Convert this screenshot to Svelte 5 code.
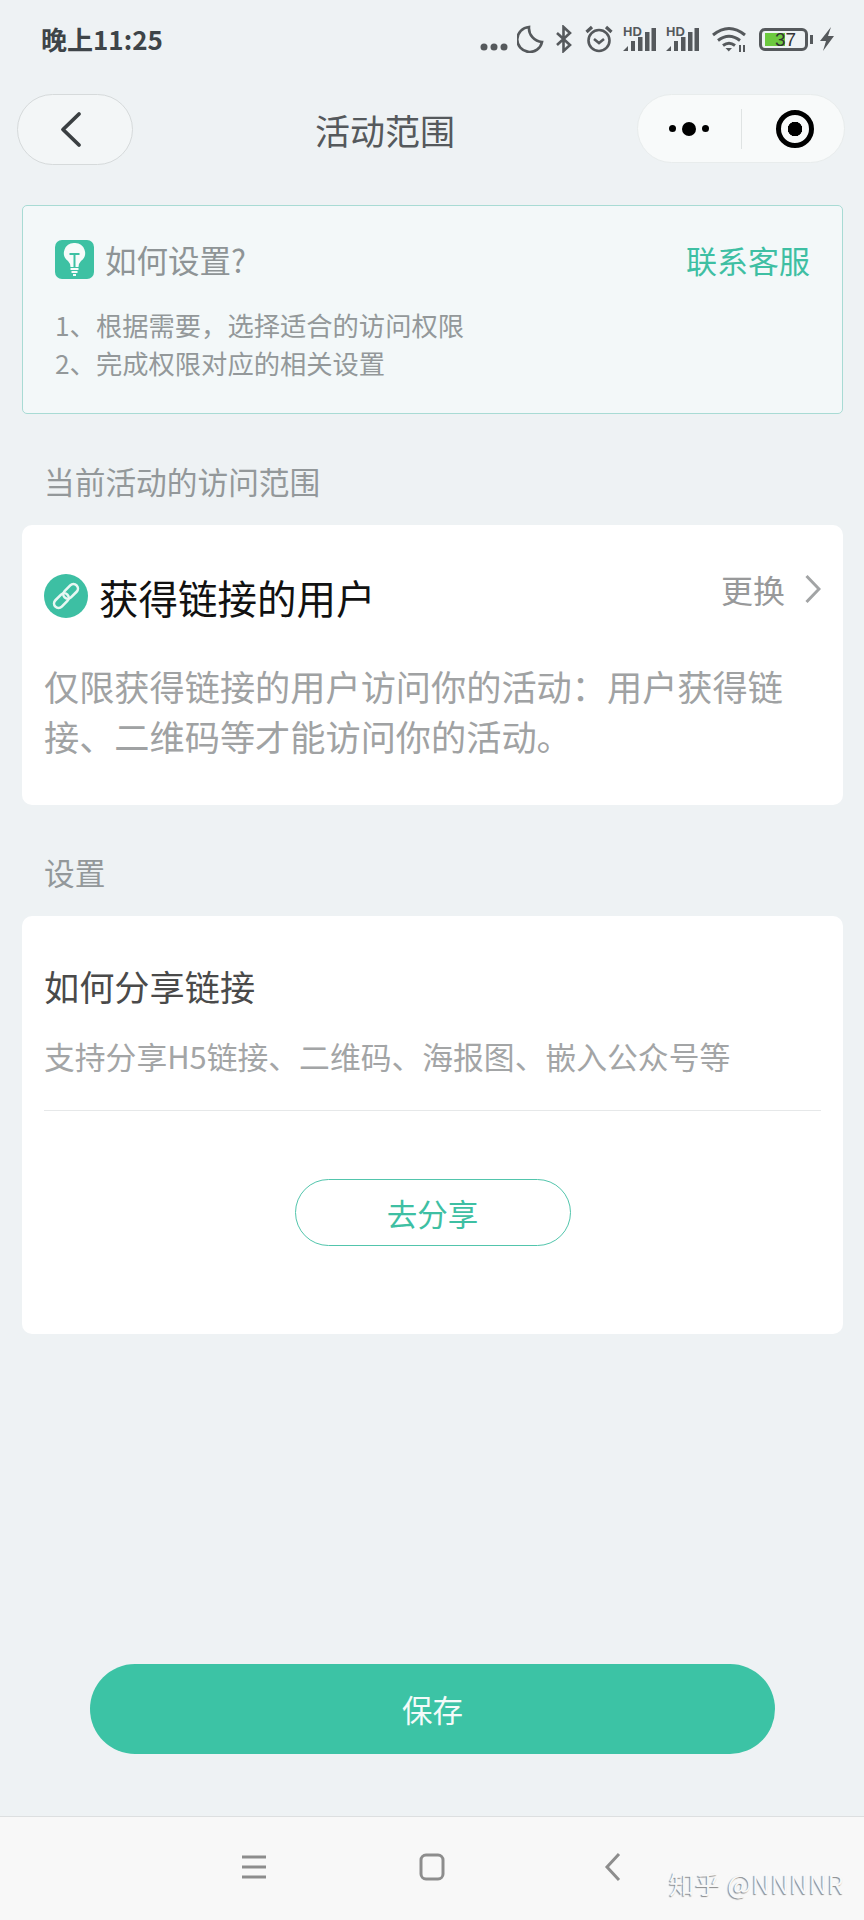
<script>
  const tip = ['1、根据需要，选择适合的访问权限', '2、完成权限对应的相关设置'];
</script>

<div class="page">
  <div class="status">
    <span class="clock">晚上11:25</span>
    <div class="sysicons">
      <svg width="28" height="28" viewBox="0 0 28 28"><circle cx="4" cy="22" r="3.500"/><circle cx="14" cy="22" r="3.500"/><circle cx="24" cy="22" r="3.500"/></svg>
      <svg class="line moon" width="27" height="28" viewBox="0 0 27 28"><path d="M12 2 A12.500 12.500 0 1 0 25 17 A14 14 0 0 1 12 2Z"/></svg>
      <svg class="line bt" width="17" height="28" viewBox="0 0 17 28"><path d="M2 8 L15 20 L8.500 26 V2 L15 8 L2 20"/></svg>
      <svg class="line alarm" width="28" height="28" viewBox="0 0 28 28"><circle cx="14" cy="15.500" r="10.500"/><path d="M9 14 L14 18 L19 14"/><path class="ear" d="M1.500 7 L7 2 M21 2 L26.500 7"/></svg>
      <span class="sig first"><b>HD</b><svg width="33" height="26" viewBox="0 0 33 26"><path d="M0 25 L5 20 V25Z M8 15 h4 v10 h-4z M15 11 h4.500 v14 h-4.500z M22 6 h4.500 v19 h-4.500z M28.500 2 h4.500 v23 h-4.500z"/></svg></span>
      <span class="sig"><b>HD</b><svg width="33" height="26" viewBox="0 0 33 26"><path d="M0 25 L5 20 V25Z M8 15 h4 v10 h-4z M15 11 h4.500 v14 h-4.500z M22 6 h4.500 v19 h-4.500z M28.500 2 h4.500 v23 h-4.500z"/></svg></span>
      <svg class="wifi" width="35" height="26" viewBox="0 0 35 26"><path d="M1 9 Q17 -4 33 9 M6 14.500 Q17 6 28 14.500 M11 19.500 Q17 15 23 19.500"/><path class="fill" d="M13.500 22 H20 L16.750 25.500Z"/><path class="thin" d="M28 19 v7 M32 19 v7"/></svg>
      <div class="battery"><div class="bat-body"><i></i><span>37</span></div><em></em></div>
      <svg class="bolt" width="16" height="24" viewBox="0 0 16 24"><path d="M12 0 L1 14 H7 L4 24 L15 9 H9Z"/></svg>
    </div>
  </div>

  <div class="nav">
    <button class="back" aria-label="返回"><svg width="22" height="37" viewBox="0 0 22 37"><path d="M19 3 L3 18.500 L19 34"/></svg></button>
    <div class="title">活动范围</div>
    <div class="capsule">
      <span class="dots"><i></i><i class="big"></i><i></i></span>
      <span class="sep"></span>
      <span class="target"></span>
    </div>
  </div>

  <section class="tip">
    <div class="tip-head">
      <div class="tip-title">
        <svg class="bulb" width="39" height="39" viewBox="0 0 39 39"><rect width="39" height="39" rx="7" fill="#3dc1a3"/><path d="M19.500 3 A10 10 0 0 1 26 21 Q23.500 23.500 23.500 27 H15.500 Q15.500 23.500 13 21 A10 10 0 0 1 19.500 3Z" fill="#f6fbfa"/><path d="M14.500 14 H24.500 M19.500 14 V27" stroke="#3dc1a3" stroke-width="2" fill="none"/><path d="M15.500 29 H23.500 M16.500 32 H22.500 M18 35 H21" stroke="#f6fbfa" stroke-width="2"/></svg>
        <span>如何设置?</span>
      </div>
      <span class="contact">联系客服</span>
    </div>
    <div class="tip-lines">
      {#each tip as t}<p>{t}</p>{/each}
    </div>
  </section>

  <h2 class="label first">当前活动的访问范围</h2>

  <section class="card scope">
    <div class="scope-head">
      <div class="scope-title">
        <svg width="44" height="44" viewBox="0 0 44 44"><circle cx="22" cy="22" r="22" fill="#3dbfa3"/><g fill="none" stroke="#e8f7f3" stroke-width="2.600" transform="rotate(-45 22 22)"><rect x="7" y="17.500" width="17" height="9" rx="4.500"/><rect x="20" y="17.500" width="17" height="9" rx="4.500"/></g></svg>
        <span>获得链接的用户</span>
      </div>
      <div class="change"><span>更换</span><svg width="16" height="30" viewBox="0 0 16 30"><path d="M1.500 2 L14 15 L1.500 28"/></svg></div>
    </div>
    <p class="scope-desc">仅限获得链接的用户访问你的活动：用户获得链接、二维码等才能访问你的活动。</p>
  </section>

  <h2 class="label second">设置</h2>

  <section class="card share">
    <h3>如何分享链接</h3>
    <p>支持分享H5链接、二维码、海报图、嵌入公众号等</p>
    <div class="rule"></div>
    <button class="go">去分享</button>
  </section>

  <div class="spacer"></div>

  <button class="save">保存</button>

  <div class="sysnav">
    <svg class="menu" width="26" height="24" viewBox="0 0 26 24"><path d="M1 2 H25 M1 12 H25 M1 22 H25"/></svg>
    <svg class="home" width="26" height="28" viewBox="0 0 26 28"><rect x="2" y="2" width="22" height="24" rx="5"/></svg>
    <svg class="tri" width="18" height="30" viewBox="0 0 18 30"><path d="M15 2 L3 15 L15 28"/></svg>
    <span class="mark">知乎 @NNNNR</span>
  </div>
</div>

<style>
  :global(body) { margin: 0; background: #eef2f4; }
  .page {
    width: 864px; height: 1920px; display: flex; flex-direction: column; overflow: hidden;
    background: #eef2f4;
    font-family: "Noto Sans CJK SC", "Noto Sans", sans-serif;
  }
  p, h2, h3 { margin: 0; font-weight: 400; }
  button { font-family: inherit; padding: 0; }

  .status { height: 78px; flex: none; display: flex; justify-content: space-between; align-items: center; padding: 0 29px 0 41px; box-sizing: border-box; }
  .clock { font-size: 26px; font-weight: 700; color: #3e4448; position: relative; top: -1px; }
  .sysicons { display: flex; align-items: center; color: #55595c; }
  .sysicons svg { fill: #55595c; flex: none; }
  .sysicons .line { fill: none; stroke: #55595c; stroke-width: 2.600; }
  .moon { margin-left: 9px; }
  .bt { margin-left: 11px; }
  .alarm { margin-left: 13px; }
  .alarm .ear { stroke-width: 3.200; }
  .sig { position: relative; display: block; width: 33px; height: 26px; margin-left: 10px; }
  .sig b { position: absolute; left: 0; top: -1px; font: 700 13px/13px "Liberation Sans", sans-serif; }
  .sig svg { position: absolute; left: 0; top: 0; }
  .sysicons .wifi { fill: none; stroke: #55595c; stroke-width: 3; margin-left: 13px; }
  .wifi .fill { fill: #55595c; stroke: none; }
  .wifi .thin { stroke-width: 2; }
  .battery { display: flex; align-items: center; gap: 2px; margin-left: 12px; }
  .bat-body { position: relative; width: 43px; height: 17px; border: 3px solid #55595c; border-radius: 6px; box-sizing: content-box; }
  .bat-body i { position: absolute; left: 3px; top: 2px; bottom: 2px; width: 20px; background: #6cc93f; }
  .bat-body span { position: absolute; left: 13px; top: 0; font: 19px/17px "Liberation Sans", sans-serif; color: #333; }
  .battery em { width: 3px; height: 9px; background: #55595c; }
  .bolt { margin-left: 6px; }

  .nav { height: 94px; flex: none; display: flex; align-items: center; padding: 0 19px 0 17px; box-sizing: border-box; }
  .back { flex: none; width: 116px; height: 71px; border-radius: 36px; border: 1px solid #d6dadb; background: #f3f6f7; display: flex; align-items: center; justify-content: center; margin-top: 9px; }
  .back svg { fill: none; stroke: #3a3f42; stroke-width: 3.800; stroke-linecap: round; stroke-linejoin: round; margin-right: 9px; }
  .title { flex: 1; text-align: center; font-size: 35px; line-height: 48px; color: #55595c; margin-top: 10px; }
  .capsule { flex: none; width: 208px; height: 69px; border-radius: 35px; border: 1px solid #e8ecec; background: #f8fafa; display: flex; align-items: center; box-sizing: border-box; margin-top: 7px; padding-left: 31px; }
  .dots { display: flex; align-items: center; gap: 6px; }
  .dots i { width: 7px; height: 7px; border-radius: 50%; background: #000; }
  .dots i.big { width: 14px; height: 14px; }
  .sep { width: 1px; height: 40px; background: #dfe3e3; margin-left: 32px; }
  .target { width: 38px; height: 38px; box-sizing: border-box; border: 5px solid #000; border-radius: 50%; background: radial-gradient(circle, #000 0 7px, #f8fafa 7.500px); margin-left: 34px; }

  .tip { margin: 33px 21px 0 22px; height: 209px; flex: none; box-sizing: border-box; border: 1.500px solid #a8dbd4; border-radius: 5px; background: #f3f8f9; padding: 33px 33px 0 32px; }
  .tip-head { display: flex; justify-content: space-between; align-items: center; height: 40px; }
  .tip-title { display: flex; align-items: center; gap: 11px; font-size: 31.500px; color: #8e9496; }
  .contact { font-size: 31px; color: #3ebfa3; margin-right: -1px; }
  .tip-lines { margin-top: 27px; font-size: 26.300px; line-height: 38px; color: #93989a; }

  .label { font-size: 30.700px; color: #93989a; margin-left: 44px; line-height: 40px; flex: none; margin-top: 47px; }
  .card { margin: 24px 21px 0 22px; background: #fff; border-radius: 10px; box-sizing: border-box; flex: none; }
  .scope { height: 280px; padding: 46px 22px 0 22px; }
  .scope-head { display: flex; justify-content: space-between; align-items: flex-start; }
  .scope-title { display: flex; align-items: center; gap: 11px; font-size: 39.500px; color: #111; height: 50px; }
  .change { display: flex; align-items: center; gap: 20px; font-size: 32px; color: #98999a; height: 40px; margin-top: -2px; }
  .change svg { fill: none; stroke: #a2a4a5; stroke-width: 3; }
  .scope-desc { margin-top: 40px; font-size: 35.200px; line-height: 50px; color: #a0a2a3; }

  .share { height: 418px; padding: 48px 22px 0 22px; }
  .share h3 { font-size: 35.200px; line-height: 44px; color: #4a4a4a; }
  .share p { margin-top: 27px; font-size: 30.800px; line-height: 42px; color: #a3a5a6; }
  .rule { height: 1px; background: #e6e8e9; margin-top: 33px; }
  .go { display: block; margin: 68px auto 0; width: 276px; height: 67px; border-radius: 34px; border: 1px solid #52c5ac; background: #fff; color: #3ebfa3; font-size: 30.500px; }

  .spacer { flex: 1; }
  .save { flex: none; width: 685px; height: 90px; margin: 0 0 62px 90px; border: none; border-radius: 45px; background: #3cc3a5; color: #f3fbf9; font-size: 30.500px; }

  .sysnav { flex: none; height: 104px; position: relative; background: #f8f8f8; border-top: 1px solid #dddfe0; box-sizing: border-box; }
  .sysnav svg { position: absolute; fill: none; stroke: #8d8d8d; stroke-width: 3; }
  .menu { left: 241px; top: 38px; }
  .home { left: 419px; top: 36px; }
  .tri { left: 604px; top: 35px; }
  .mark { position: absolute; left: 669px; top: 47px; font-size: 25.500px; letter-spacing: 0.500px; color: #f8f8f8; text-shadow: -1px 1px 1px #8a8a8a; }
</style>
